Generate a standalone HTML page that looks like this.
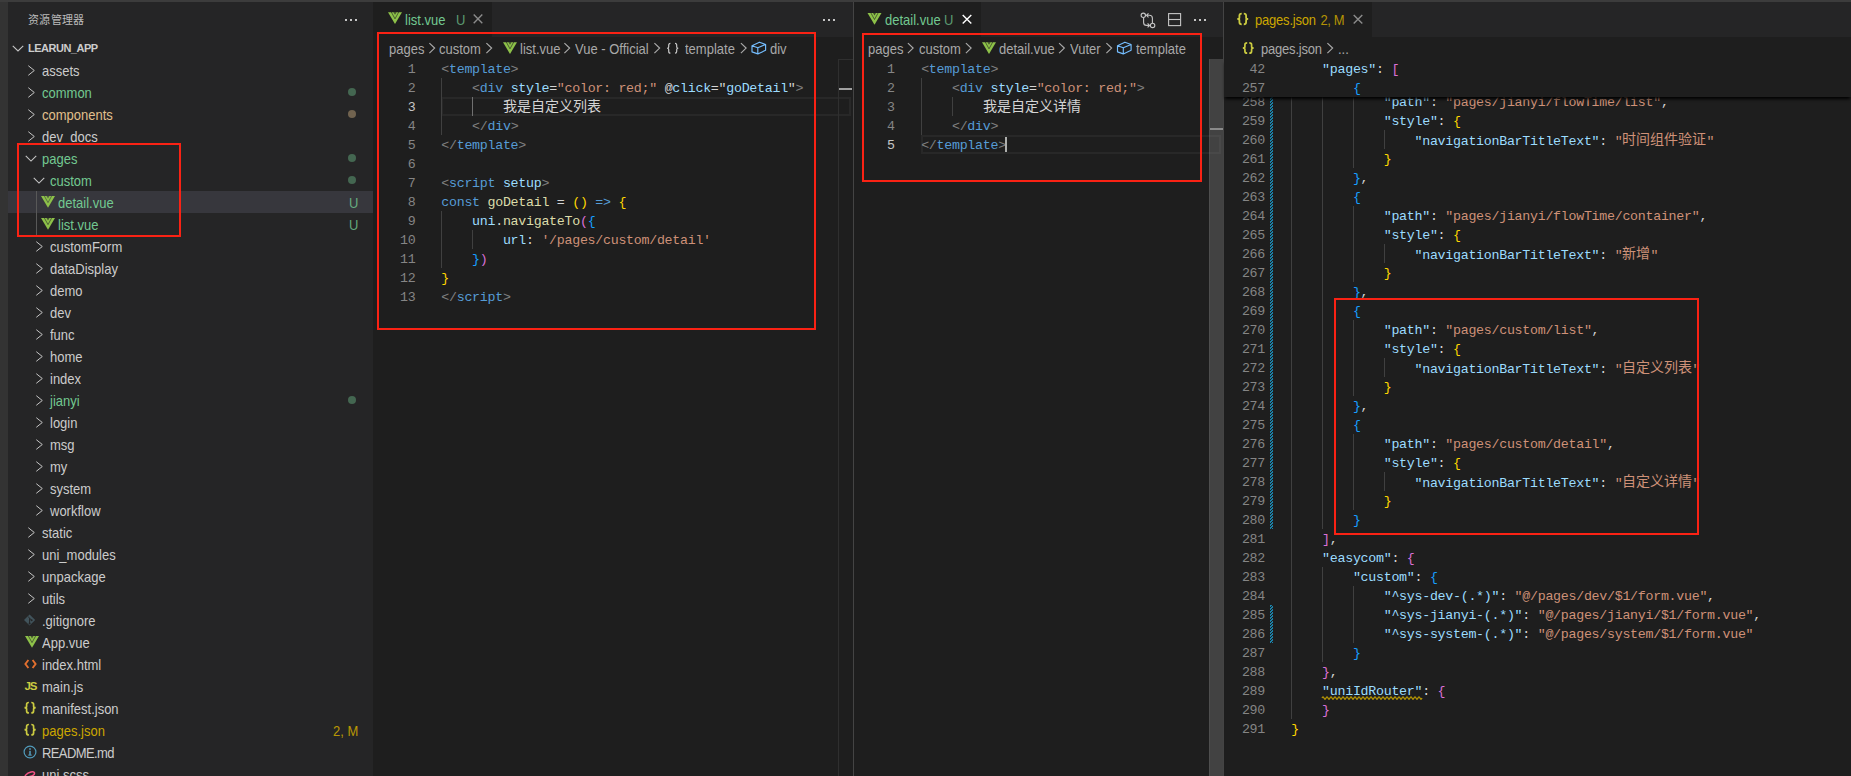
<!DOCTYPE html><html lang="zh-CN"><head><meta charset="utf-8"><title>VS Code</title><style>
*{box-sizing:border-box;margin:0;padding:0}
html,body{width:1851px;height:776px;overflow:hidden;background:#1e1e1e}
body{position:relative;font-family:"Liberation Sans",sans-serif;color:#cccccc}
.a{position:absolute}
.code{margin-top:1px;font-family:"Liberation Mono",monospace;font-size:13.3px;letter-spacing:-0.28px;white-space:pre;line-height:19px;height:19px;color:#d4d4d4}
.cj{font-size:14px;letter-spacing:0;font-family:"Liberation Sans",sans-serif;position:relative;top:-1px}
.tag{color:#569cd6}.br{color:#808080}.attr{color:#9cdcfe}.str{color:#ce9178}.txt{color:#d4d4d4}
.fn{color:#dcdcaa}.kw{color:#569cd6}.var{color:#9cdcfe}.g{color:#ffd700}.m{color:#da70d6}.b{color:#179fff}
.ln{margin-top:1px;font-family:"Liberation Mono",monospace;font-size:13.3px;letter-spacing:-0.28px;line-height:19px;height:19px;color:#858585;text-align:right;width:60px}
.ui{margin-top:2px;font-size:13px;line-height:22px;height:22px;white-space:pre;transform:scaleY(1.09);transform-origin:0 15.5px}
.ig{position:absolute;width:1px;background:#404040}
.red{position:absolute;border:2px solid #fa2214}
</style></head><body><div class="a" style="left:0px;top:0px;width:1851px;height:2px;background:#3c3c3c"></div><div class="a" style="left:0px;top:2px;width:8px;height:774px;background:#333333"></div><div class="a" style="left:8px;top:2px;width:365px;height:774px;background:#252526"></div><div class="a" style="left:853px;top:2px;width:1px;height:774px;background:#444444"></div><div class="a" style="left:1223px;top:2px;width:1px;height:774px;background:#444444"></div><div class="a" style="left:373px;top:2px;width:480px;height:35px;background:#252526"></div><div class="a" style="left:854px;top:2px;width:369px;height:35px;background:#252526"></div><div class="a" style="left:1224px;top:2px;width:627px;height:35px;background:#252526"></div><div class="a" style="left:28px;top:9px;font-size:11px;line-height:22px;color:#bbbbbb;letter-spacing:0.3px">资源管理器</div><div class="a" style="left:28px;top:37px;font-size:11px;line-height:22px;font-weight:bold;color:#cccccc;letter-spacing:-0.5px">LEARUN_APP</div><div class="a ui" style="left:42px;top:59px;color:#cccccc">assets</div><div class="a ui" style="left:42px;top:81px;color:#73c991">common</div><div class="a ui" style="left:42px;top:103px;color:#e2c08d">components</div><div class="a ui" style="left:42px;top:125px;color:#cccccc">dev_docs</div><div class="a ui" style="left:42px;top:147px;color:#73c991">pages</div><div class="a ui" style="left:50px;top:169px;color:#73c991">custom</div><div class="a" style="left:8px;top:191px;width:365px;height:22px;background:#37373d"></div><div class="a ui" style="left:58px;top:191px;color:#73c991">detail.vue</div><div class="a ui" style="left:349px;top:191px;color:#73c991;opacity:0.8">U</div><div class="a ui" style="left:58px;top:213px;color:#73c991">list.vue</div><div class="a ui" style="left:349px;top:213px;color:#73c991;opacity:0.8">U</div><div class="a ui" style="left:50px;top:235px;color:#cccccc">customForm</div><div class="a ui" style="left:50px;top:257px;color:#cccccc">dataDisplay</div><div class="a ui" style="left:50px;top:279px;color:#cccccc">demo</div><div class="a ui" style="left:50px;top:301px;color:#cccccc">dev</div><div class="a ui" style="left:50px;top:323px;color:#cccccc">func</div><div class="a ui" style="left:50px;top:345px;color:#cccccc">home</div><div class="a ui" style="left:50px;top:367px;color:#cccccc">index</div><div class="a ui" style="left:50px;top:389px;color:#73c991">jianyi</div><div class="a ui" style="left:50px;top:411px;color:#cccccc">login</div><div class="a ui" style="left:50px;top:433px;color:#cccccc">msg</div><div class="a ui" style="left:50px;top:455px;color:#cccccc">my</div><div class="a ui" style="left:50px;top:477px;color:#cccccc">system</div><div class="a ui" style="left:50px;top:499px;color:#cccccc">workflow</div><div class="a ui" style="left:42px;top:521px;color:#cccccc">static</div><div class="a ui" style="left:42px;top:543px;color:#cccccc">uni_modules</div><div class="a ui" style="left:42px;top:565px;color:#cccccc">unpackage</div><div class="a ui" style="left:42px;top:587px;color:#cccccc">utils</div><div class="a ui" style="left:42px;top:609px;color:#cccccc">.gitignore</div><div class="a ui" style="left:42px;top:631px;color:#cccccc">App.vue</div><div class="a ui" style="left:42px;top:653px;color:#cccccc">index.html</div><div class="a" style="left:24.5px;top:677.5px;font-size:11.5px;line-height:16px;font-weight:bold;color:#cbcb41;letter-spacing:-1.2px">JS</div><div class="a ui" style="left:42px;top:675px;color:#cccccc">main.js</div><div class="a ui" style="left:42px;top:697px;color:#cccccc">manifest.json</div><div class="a ui" style="left:42px;top:719px;color:#cca700">pages.json</div><div class="a ui" style="left:333px;top:719px;color:#cca700;opacity:0.88">2, M</div><div class="a ui" style="left:42px;top:741px;color:#cccccc;letter-spacing:-0.6px">README.md</div><div class="a ui" style="left:42px;top:763px;color:#cccccc">uni.scss</div><div class="a" style="left:36px;top:191px;width:1px;height:44px;background:#585858"></div><div class="a" style="left:373px;top:2px;width:119px;height:35px;background:#1e1e1e"></div><div class="a ui" style="left:405px;top:8px;color:#73c991">list.vue</div><div class="a ui" style="left:456px;top:8px;color:#73c991;opacity:0.72">U</div><div class="a ui" style="left:389px;top:37px;color:#a9a9a9">pages</div><div class="a ui" style="left:439px;top:37px;color:#a9a9a9">custom</div><div class="a ui" style="left:520px;top:37px;color:#a9a9a9">list.vue</div><div class="a ui" style="left:575px;top:37px;color:#a9a9a9">Vue - Official</div><div class="a ui" style="left:685px;top:37px;color:#a9a9a9">template</div><div class="a ui" style="left:770px;top:37px;color:#a9a9a9">div</div><div class="a" style="left:441.3px;top:97px;width:409.7px;height:19px;background:transparent;border:2px solid #282828"></div><div class="ig" style="left:441.3px;top:78px;height:57px;background:#404040"></div><div class="ig" style="left:472.1px;top:97px;height:19px;background:#707070"></div><div class="ig" style="left:441.3px;top:211px;height:57px;background:#404040"></div><div class="ig" style="left:472.1px;top:230px;height:19px;background:#404040"></div><div class="a" style="left:838px;top:59px;width:15px;height:717px;border-left:1px solid #2f2f2f;border-top:1px solid #2f2f2f"></div><div class="a" style="left:839px;top:88px;width:13px;height:2px;background:#a0a0a0"></div><div class="a ln" style="left:355.5px;top:59px;color:#858585">1</div><div class="a code" style="left:441.3px;top:59px"><span class="br">&lt;</span><span class="tag">template</span><span class="br">&gt;</span></div><div class="a ln" style="left:355.5px;top:78px;color:#858585">2</div><div class="a code" style="left:441.3px;top:78px">    <span class="br">&lt;</span><span class="tag">div</span> <span class="attr">style</span><span class="txt">=</span><span class="str">"color: red;"</span> <span class="txt">@</span><span class="attr">click</span><span class="txt">="</span><span class="var">goDetail</span><span class="txt">"</span><span class="br">&gt;</span></div><div class="a ln" style="left:355.5px;top:97px;color:#c6c6c6">3</div><div class="a code" style="left:441.3px;top:97px">        <span class="cj">我是自定义列表</span></div><div class="a ln" style="left:355.5px;top:116px;color:#858585">4</div><div class="a code" style="left:441.3px;top:116px">    <span class="br">&lt;/</span><span class="tag">div</span><span class="br">&gt;</span></div><div class="a ln" style="left:355.5px;top:135px;color:#858585">5</div><div class="a code" style="left:441.3px;top:135px"><span class="br">&lt;/</span><span class="tag">template</span><span class="br">&gt;</span></div><div class="a ln" style="left:355.5px;top:154px;color:#858585">6</div><div class="a code" style="left:441.3px;top:154px"></div><div class="a ln" style="left:355.5px;top:173px;color:#858585">7</div><div class="a code" style="left:441.3px;top:173px"><span class="br">&lt;</span><span class="tag">script</span> <span class="attr">setup</span><span class="br">&gt;</span></div><div class="a ln" style="left:355.5px;top:192px;color:#858585">8</div><div class="a code" style="left:441.3px;top:192px"><span class="kw">const</span> <span class="fn">goDetail</span><span class="txt"> = </span><span class="g">()</span><span class="txt"> </span><span class="kw">=&gt;</span><span class="txt"> </span><span class="g">{</span></div><div class="a ln" style="left:355.5px;top:211px;color:#858585">9</div><div class="a code" style="left:441.3px;top:211px">    <span class="var">uni</span><span class="txt">.</span><span class="fn">navigateTo</span><span class="m">(</span><span class="b">{</span></div><div class="a ln" style="left:355.5px;top:230px;color:#858585">10</div><div class="a code" style="left:441.3px;top:230px">        <span class="var">url</span><span class="txt">: </span><span class="str">'/pages/custom/detail'</span></div><div class="a ln" style="left:355.5px;top:249px;color:#858585">11</div><div class="a code" style="left:441.3px;top:249px">    <span class="b">}</span><span class="m">)</span></div><div class="a ln" style="left:355.5px;top:268px;color:#858585">12</div><div class="a code" style="left:441.3px;top:268px"><span class="g">}</span></div><div class="a ln" style="left:355.5px;top:287px;color:#858585">13</div><div class="a code" style="left:441.3px;top:287px"><span class="br">&lt;/</span><span class="tag">script</span><span class="br">&gt;</span></div><div class="a" style="left:854px;top:2px;width:127px;height:35px;background:#1e1e1e"></div><div class="a ui" style="left:885px;top:8px;color:#73c991">detail.vue</div><div class="a ui" style="left:944px;top:8px;color:#73c991;opacity:0.72">U</div><div class="a ui" style="left:868px;top:37px;color:#a9a9a9">pages</div><div class="a ui" style="left:919px;top:37px;color:#a9a9a9">custom</div><div class="a ui" style="left:999px;top:37px;color:#a9a9a9">detail.vue</div><div class="a ui" style="left:1070px;top:37px;color:#a9a9a9">Vuter</div><div class="a ui" style="left:1136px;top:37px;color:#a9a9a9">template</div><div class="a" style="left:921.15px;top:135px;width:299.85px;height:19px;background:transparent;border:2px solid #282828"></div><div class="ig" style="left:921.15px;top:78px;height:57px;background:#404040"></div><div class="ig" style="left:951.9499999999999px;top:97px;height:19px;background:#404040"></div><div class="a ln" style="left:834.8px;top:59px;color:#858585">1</div><div class="a code" style="left:921.15px;top:59px"><span class="br">&lt;</span><span class="tag">template</span><span class="br">&gt;</span></div><div class="a ln" style="left:834.8px;top:78px;color:#858585">2</div><div class="a code" style="left:921.15px;top:78px">    <span class="br">&lt;</span><span class="tag">div</span> <span class="attr">style</span><span class="txt">=</span><span class="str">"color: red;"</span><span class="br">&gt;</span></div><div class="a ln" style="left:834.8px;top:97px;color:#858585">3</div><div class="a code" style="left:921.15px;top:97px">        <span class="cj">我是自定义详情</span></div><div class="a ln" style="left:834.8px;top:116px;color:#858585">4</div><div class="a code" style="left:921.15px;top:116px">    <span class="br">&lt;/</span><span class="tag">div</span><span class="br">&gt;</span></div><div class="a ln" style="left:834.8px;top:135px;color:#c6c6c6">5</div><div class="a code" style="left:921.15px;top:135px"><span class="br">&lt;/</span><span class="tag">template</span><span class="br">&gt;</span></div><div class="a" style="left:1005px;top:137px;width:2px;height:15px;background:#aeafad"></div><div class="a" style="left:1209px;top:59px;width:14px;height:717px;background:#424242;border-left:1px solid #4e4e4e"></div><div class="a" style="left:1210px;top:128px;width:13px;height:2px;background:#8a8a8a"></div><div class="a" style="left:1209px;top:135px;width:12px;height:19px;background:transparent;border:2px solid rgba(255,255,255,0.04);border-left:none"></div><div class="a" style="left:1224px;top:2px;width:148px;height:35px;background:#1e1e1e"></div><div class="a ui" style="left:1255px;top:8px;color:#cca700;letter-spacing:-0.2px">pages.json</div><div class="a ui" style="left:1320.5px;top:8px;color:#cca700;letter-spacing:-0.4px;opacity:0.85">2, M</div><div class="a ui" style="left:1261px;top:37px;color:#a9a9a9;letter-spacing:-0.2px">pages.json</div><div class="a ui" style="left:1338px;top:37px;color:#a9a9a9">...</div><div class="ig" style="left:1291.3px;top:92px;height:19px;background:#404040"></div><div class="ig" style="left:1291.3px;top:111px;height:19px;background:#404040"></div><div class="ig" style="left:1291.3px;top:130px;height:19px;background:#404040"></div><div class="ig" style="left:1291.3px;top:149px;height:19px;background:#404040"></div><div class="ig" style="left:1291.3px;top:168px;height:19px;background:#404040"></div><div class="ig" style="left:1291.3px;top:187px;height:19px;background:#404040"></div><div class="ig" style="left:1291.3px;top:206px;height:19px;background:#404040"></div><div class="ig" style="left:1291.3px;top:225px;height:19px;background:#404040"></div><div class="ig" style="left:1291.3px;top:244px;height:19px;background:#404040"></div><div class="ig" style="left:1291.3px;top:263px;height:19px;background:#404040"></div><div class="ig" style="left:1291.3px;top:282px;height:19px;background:#404040"></div><div class="ig" style="left:1291.3px;top:301px;height:19px;background:#404040"></div><div class="ig" style="left:1291.3px;top:320px;height:19px;background:#404040"></div><div class="ig" style="left:1291.3px;top:339px;height:19px;background:#404040"></div><div class="ig" style="left:1291.3px;top:358px;height:19px;background:#404040"></div><div class="ig" style="left:1291.3px;top:377px;height:19px;background:#404040"></div><div class="ig" style="left:1291.3px;top:396px;height:19px;background:#404040"></div><div class="ig" style="left:1291.3px;top:415px;height:19px;background:#404040"></div><div class="ig" style="left:1291.3px;top:434px;height:19px;background:#404040"></div><div class="ig" style="left:1291.3px;top:453px;height:19px;background:#404040"></div><div class="ig" style="left:1291.3px;top:472px;height:19px;background:#404040"></div><div class="ig" style="left:1291.3px;top:491px;height:19px;background:#404040"></div><div class="ig" style="left:1291.3px;top:510px;height:19px;background:#404040"></div><div class="ig" style="left:1291.3px;top:529px;height:19px;background:#404040"></div><div class="ig" style="left:1291.3px;top:548px;height:19px;background:#404040"></div><div class="ig" style="left:1291.3px;top:567px;height:19px;background:#404040"></div><div class="ig" style="left:1291.3px;top:586px;height:19px;background:#404040"></div><div class="ig" style="left:1291.3px;top:605px;height:19px;background:#404040"></div><div class="ig" style="left:1291.3px;top:624px;height:19px;background:#404040"></div><div class="ig" style="left:1291.3px;top:643px;height:19px;background:#404040"></div><div class="ig" style="left:1291.3px;top:662px;height:19px;background:#404040"></div><div class="ig" style="left:1291.3px;top:681px;height:19px;background:#404040"></div><div class="ig" style="left:1291.3px;top:700px;height:19px;background:#404040"></div><div class="ig" style="left:1322.1px;top:92px;height:437px;background:#404040"></div><div class="ig" style="left:1322.1px;top:567px;height:95px;background:#404040"></div><div class="ig" style="left:1352.8999999999999px;top:92px;height:76px;background:#404040"></div><div class="ig" style="left:1352.8999999999999px;top:206px;height:76px;background:#404040"></div><div class="ig" style="left:1352.8999999999999px;top:320px;height:76px;background:#404040"></div><div class="ig" style="left:1352.8999999999999px;top:434px;height:76px;background:#404040"></div><div class="ig" style="left:1352.8999999999999px;top:586px;height:57px;background:#404040"></div><div class="ig" style="left:1383.7px;top:130px;height:19px;background:#404040"></div><div class="ig" style="left:1383.7px;top:244px;height:19px;background:#404040"></div><div class="ig" style="left:1383.7px;top:358px;height:19px;background:#404040"></div><div class="ig" style="left:1383.7px;top:472px;height:19px;background:#404040"></div><div class="a" style="left:1270px;top:92px;width:3px;height:437px;background:repeating-linear-gradient(-45deg,#1b81a8 0 1.4px,#1e1e1e 1.4px 2.12px)"></div><div class="a" style="left:1270px;top:605px;width:3px;height:38px;background:repeating-linear-gradient(-45deg,#1b81a8 0 1.4px,#1e1e1e 1.4px 2.12px)"></div><div class="a ln" style="left:1205px;top:92px;color:#858585">258</div><div class="a code" style="left:1291.3px;top:92px">            <span class="attr">"path"</span><span class="txt">: </span><span class="str">"pages/jianyi/flowTime/list"</span><span class="txt">,</span></div><div class="a ln" style="left:1205px;top:111px;color:#858585">259</div><div class="a code" style="left:1291.3px;top:111px">            <span class="attr">"style"</span><span class="txt">: </span><span class="g">{</span></div><div class="a ln" style="left:1205px;top:130px;color:#858585">260</div><div class="a code" style="left:1291.3px;top:130px">                <span class="attr">"navigationBarTitleText"</span><span class="txt">: </span><span class="str">"</span><span class="cj str">时间组件验证</span><span class="str">"</span></div><div class="a ln" style="left:1205px;top:149px;color:#858585">261</div><div class="a code" style="left:1291.3px;top:149px">            <span class="g">}</span></div><div class="a ln" style="left:1205px;top:168px;color:#858585">262</div><div class="a code" style="left:1291.3px;top:168px">        <span class="b">}</span><span class="txt">,</span></div><div class="a ln" style="left:1205px;top:187px;color:#858585">263</div><div class="a code" style="left:1291.3px;top:187px">        <span class="b">{</span></div><div class="a ln" style="left:1205px;top:206px;color:#858585">264</div><div class="a code" style="left:1291.3px;top:206px">            <span class="attr">"path"</span><span class="txt">: </span><span class="str">"pages/jianyi/flowTime/container"</span><span class="txt">,</span></div><div class="a ln" style="left:1205px;top:225px;color:#858585">265</div><div class="a code" style="left:1291.3px;top:225px">            <span class="attr">"style"</span><span class="txt">: </span><span class="g">{</span></div><div class="a ln" style="left:1205px;top:244px;color:#858585">266</div><div class="a code" style="left:1291.3px;top:244px">                <span class="attr">"navigationBarTitleText"</span><span class="txt">: </span><span class="str">"</span><span class="cj str">新增</span><span class="str">"</span></div><div class="a ln" style="left:1205px;top:263px;color:#858585">267</div><div class="a code" style="left:1291.3px;top:263px">            <span class="g">}</span></div><div class="a ln" style="left:1205px;top:282px;color:#858585">268</div><div class="a code" style="left:1291.3px;top:282px">        <span class="b">}</span><span class="txt">,</span></div><div class="a ln" style="left:1205px;top:301px;color:#858585">269</div><div class="a code" style="left:1291.3px;top:301px">        <span class="b">{</span></div><div class="a ln" style="left:1205px;top:320px;color:#858585">270</div><div class="a code" style="left:1291.3px;top:320px">            <span class="attr">"path"</span><span class="txt">: </span><span class="str">"pages/custom/list"</span><span class="txt">,</span></div><div class="a ln" style="left:1205px;top:339px;color:#858585">271</div><div class="a code" style="left:1291.3px;top:339px">            <span class="attr">"style"</span><span class="txt">: </span><span class="g">{</span></div><div class="a ln" style="left:1205px;top:358px;color:#858585">272</div><div class="a code" style="left:1291.3px;top:358px">                <span class="attr">"navigationBarTitleText"</span><span class="txt">: </span><span class="str">"</span><span class="cj str">自定义列表</span><span class="str">"</span></div><div class="a ln" style="left:1205px;top:377px;color:#858585">273</div><div class="a code" style="left:1291.3px;top:377px">            <span class="g">}</span></div><div class="a ln" style="left:1205px;top:396px;color:#858585">274</div><div class="a code" style="left:1291.3px;top:396px">        <span class="b">}</span><span class="txt">,</span></div><div class="a ln" style="left:1205px;top:415px;color:#858585">275</div><div class="a code" style="left:1291.3px;top:415px">        <span class="b">{</span></div><div class="a ln" style="left:1205px;top:434px;color:#858585">276</div><div class="a code" style="left:1291.3px;top:434px">            <span class="attr">"path"</span><span class="txt">: </span><span class="str">"pages/custom/detail"</span><span class="txt">,</span></div><div class="a ln" style="left:1205px;top:453px;color:#858585">277</div><div class="a code" style="left:1291.3px;top:453px">            <span class="attr">"style"</span><span class="txt">: </span><span class="g">{</span></div><div class="a ln" style="left:1205px;top:472px;color:#858585">278</div><div class="a code" style="left:1291.3px;top:472px">                <span class="attr">"navigationBarTitleText"</span><span class="txt">: </span><span class="str">"</span><span class="cj str">自定义详情</span><span class="str">"</span></div><div class="a ln" style="left:1205px;top:491px;color:#858585">279</div><div class="a code" style="left:1291.3px;top:491px">            <span class="g">}</span></div><div class="a ln" style="left:1205px;top:510px;color:#858585">280</div><div class="a code" style="left:1291.3px;top:510px">        <span class="b">}</span></div><div class="a ln" style="left:1205px;top:529px;color:#858585">281</div><div class="a code" style="left:1291.3px;top:529px">    <span class="m">]</span><span class="txt">,</span></div><div class="a ln" style="left:1205px;top:548px;color:#858585">282</div><div class="a code" style="left:1291.3px;top:548px">    <span class="attr">"easycom"</span><span class="txt">: </span><span class="m">{</span></div><div class="a ln" style="left:1205px;top:567px;color:#858585">283</div><div class="a code" style="left:1291.3px;top:567px">        <span class="attr">"custom"</span><span class="txt">: </span><span class="b">{</span></div><div class="a ln" style="left:1205px;top:586px;color:#858585">284</div><div class="a code" style="left:1291.3px;top:586px">            <span class="attr">"^sys-dev-(.*)"</span><span class="txt">: </span><span class="str">"@/pages/dev/$1/form.vue"</span><span class="txt">,</span></div><div class="a ln" style="left:1205px;top:605px;color:#858585">285</div><div class="a code" style="left:1291.3px;top:605px">            <span class="attr">"^sys-jianyi-(.*)"</span><span class="txt">: </span><span class="str">"@/pages/jianyi/$1/form.vue"</span><span class="txt">,</span></div><div class="a ln" style="left:1205px;top:624px;color:#858585">286</div><div class="a code" style="left:1291.3px;top:624px">            <span class="attr">"^sys-system-(.*)"</span><span class="txt">: </span><span class="str">"@/pages/system/$1/form.vue"</span></div><div class="a ln" style="left:1205px;top:643px;color:#858585">287</div><div class="a code" style="left:1291.3px;top:643px">        <span class="b">}</span></div><div class="a ln" style="left:1205px;top:662px;color:#858585">288</div><div class="a code" style="left:1291.3px;top:662px">    <span class="m">}</span><span class="txt">,</span></div><div class="a ln" style="left:1205px;top:681px;color:#858585">289</div><div class="a code" style="left:1291.3px;top:681px">    <span class="attr">"uniIdRouter"</span><span class="txt">: </span><span class="m">{</span></div><div class="a ln" style="left:1205px;top:700px;color:#858585">290</div><div class="a code" style="left:1291.3px;top:700px">    <span class="m">}</span></div><div class="a ln" style="left:1205px;top:719px;color:#858585">291</div><div class="a code" style="left:1291.3px;top:719px"><span class="g">}</span></div><div class="a" style="left:1224px;top:59px;width:627px;height:38px;background:#1e1e1e;box-shadow:0 3px 3px -1px #000"></div><div class="a ln" style="left:1205px;top:59px;color:#858585">42</div><div class="a code" style="left:1291.3px;top:59px">    <span class="attr">"pages"</span><span class="txt">: </span><span class="m">[</span></div><div class="a ln" style="left:1205px;top:78px;color:#858585">257</div><div class="a code" style="left:1291.3px;top:78px">        <span class="b">{</span></div><svg class="a" style="left:0;top:0" width="1851" height="776" viewBox="0 0 1851 776"><rect x="345" y="19" width="2" height="2" fill="#c5c5c5"/><rect x="350" y="19" width="2" height="2" fill="#c5c5c5"/><rect x="355" y="19" width="2" height="2" fill="#c5c5c5"/><path d="M12.75 45.8 L18 51.0 L23.25 45.8" fill="none" stroke="#c5c5c5" stroke-width="1.1"/><path d="M28.3 65.7 L34.3 70.5 L28.3 75.3" fill="none" stroke="#c5c5c5" stroke-width="1.0"/><path d="M28.3 87.7 L34.3 92.5 L28.3 97.3" fill="none" stroke="#c5c5c5" stroke-width="1.0"/><circle cx="352" cy="92" r="4" fill="#446751"/><path d="M28.3 109.7 L34.3 114.5 L28.3 119.3" fill="none" stroke="#c5c5c5" stroke-width="1.0"/><circle cx="352" cy="114" r="4" fill="#71634f"/><path d="M28.3 131.7 L34.3 136.5 L28.3 141.3" fill="none" stroke="#c5c5c5" stroke-width="1.0"/><path d="M25.75 155.9 L31 161.1 L36.25 155.9" fill="none" stroke="#c5c5c5" stroke-width="1.1"/><circle cx="352" cy="158" r="4" fill="#446751"/><path d="M33.75 177.9 L39 183.1 L44.25 177.9" fill="none" stroke="#c5c5c5" stroke-width="1.1"/><circle cx="352" cy="180" r="4" fill="#446751"/><path d="M41 196 H55 L48 207.8 Z" fill="#8dc149"/><path d="M44.2 195.7 L48 202.6 L51.8 195.7" fill="none" stroke="#37373d" stroke-width="1" opacity="0.6"/><path d="M46.5 196 H49.5 L48 198.5 Z" fill="#37373d" opacity="0.7"/><path d="M41 218 H55 L48 229.8 Z" fill="#8dc149"/><path d="M44.2 217.7 L48 224.6 L51.8 217.7" fill="none" stroke="#252526" stroke-width="1" opacity="0.6"/><path d="M46.5 218 H49.5 L48 220.5 Z" fill="#252526" opacity="0.7"/><path d="M36.3 241.7 L42.3 246.5 L36.3 251.3" fill="none" stroke="#c5c5c5" stroke-width="1.0"/><path d="M36.3 263.7 L42.3 268.5 L36.3 273.3" fill="none" stroke="#c5c5c5" stroke-width="1.0"/><path d="M36.3 285.7 L42.3 290.5 L36.3 295.3" fill="none" stroke="#c5c5c5" stroke-width="1.0"/><path d="M36.3 307.7 L42.3 312.5 L36.3 317.3" fill="none" stroke="#c5c5c5" stroke-width="1.0"/><path d="M36.3 329.7 L42.3 334.5 L36.3 339.3" fill="none" stroke="#c5c5c5" stroke-width="1.0"/><path d="M36.3 351.7 L42.3 356.5 L36.3 361.3" fill="none" stroke="#c5c5c5" stroke-width="1.0"/><path d="M36.3 373.7 L42.3 378.5 L36.3 383.3" fill="none" stroke="#c5c5c5" stroke-width="1.0"/><path d="M36.3 395.7 L42.3 400.5 L36.3 405.3" fill="none" stroke="#c5c5c5" stroke-width="1.0"/><circle cx="352" cy="400" r="4" fill="#446751"/><path d="M36.3 417.7 L42.3 422.5 L36.3 427.3" fill="none" stroke="#c5c5c5" stroke-width="1.0"/><path d="M36.3 439.7 L42.3 444.5 L36.3 449.3" fill="none" stroke="#c5c5c5" stroke-width="1.0"/><path d="M36.3 461.7 L42.3 466.5 L36.3 471.3" fill="none" stroke="#c5c5c5" stroke-width="1.0"/><path d="M36.3 483.7 L42.3 488.5 L36.3 493.3" fill="none" stroke="#c5c5c5" stroke-width="1.0"/><path d="M36.3 505.7 L42.3 510.5 L36.3 515.3" fill="none" stroke="#c5c5c5" stroke-width="1.0"/><path d="M28.3 527.7 L34.3 532.5 L28.3 537.3" fill="none" stroke="#c5c5c5" stroke-width="1.0"/><path d="M28.3 549.7 L34.3 554.5 L28.3 559.3" fill="none" stroke="#c5c5c5" stroke-width="1.0"/><path d="M28.3 571.7 L34.3 576.5 L28.3 581.3" fill="none" stroke="#c5c5c5" stroke-width="1.0"/><path d="M28.3 593.7 L34.3 598.5 L28.3 603.3" fill="none" stroke="#c5c5c5" stroke-width="1.0"/><path d="M29.6 614.4 L35.2 620 L29.6 625.6 L24 620 Z" fill="#41535b"/><path d="M28.2 616.8 L31.6 620.2 M29.6 618.4 V623.5" stroke="#252526" stroke-width="1"/><circle cx="29.6" cy="623.4" r="1" fill="#252526"/><circle cx="31.6" cy="620.2" r="1" fill="#252526"/><path d="M25 636 H39 L32 647.8 Z" fill="#8dc149"/><path d="M28.2 635.7 L32 642.6 L35.8 635.7" fill="none" stroke="#252526" stroke-width="1" opacity="0.6"/><path d="M30.5 636 H33.5 L32 638.5 Z" fill="#252526" opacity="0.7"/><path d="M28.4 660 L25.4 664 L28.4 668 M32.6 660 L35.6 664 L32.6 668" fill="none" stroke="#e4702f" stroke-width="1.9"/><path d="M28.9 702.5 Q26.599999999999998 702.5 26.599999999999998 704.5 V706.5 Q26.599999999999998 707.7 24.5 707.7 Q26.599999999999998 707.7 26.599999999999998 708.9000000000001 V710.9000000000001 Q26.599999999999998 712.9000000000001 28.9 712.9000000000001" fill="none" stroke="#cbcb41" stroke-width="1.7"/><path d="M31.3 702.5 Q33.6 702.5 33.6 704.5 V706.5 Q33.6 707.7 35.7 707.7 Q33.6 707.7 33.6 708.9000000000001 V710.9000000000001 Q33.6 712.9000000000001 31.3 712.9000000000001" fill="none" stroke="#cbcb41" stroke-width="1.7"/><path d="M28.9 724.5 Q26.599999999999998 724.5 26.599999999999998 726.5 V728.5 Q26.599999999999998 729.7 24.5 729.7 Q26.599999999999998 729.7 26.599999999999998 730.9000000000001 V732.9000000000001 Q26.599999999999998 734.9000000000001 28.9 734.9000000000001" fill="none" stroke="#cbcb41" stroke-width="1.7"/><path d="M31.3 724.5 Q33.6 724.5 33.6 726.5 V728.5 Q33.6 729.7 35.7 729.7 Q33.6 729.7 33.6 730.9000000000001 V732.9000000000001 Q33.6 734.9000000000001 31.3 734.9000000000001" fill="none" stroke="#cbcb41" stroke-width="1.7"/><circle cx="30" cy="752" r="5.9" fill="none" stroke="#519aba" stroke-width="1.2"/><rect x="29.2" y="750.8" width="1.6" height="4.4" fill="#519aba"/><rect x="28.2" y="754.6" width="3.6" height="1" fill="#519aba"/><rect x="29.2" y="748.2" width="1.6" height="1.6" fill="#519aba"/><path d="M26 780 C23 776 27 773 31 772 C35 771 36 774 32 776 C29 777.5 28 775 30 780" fill="none" stroke="#f55385" stroke-width="1.5"/><path d="M388 12.2 H402 L395 24.0 Z" fill="#8dc149"/><path d="M391.2 11.899999999999999 L395 18.799999999999997 L398.8 11.899999999999999" fill="none" stroke="#1e1e1e" stroke-width="1" opacity="0.6"/><path d="M393.5 12.2 H396.5 L395 14.7 Z" fill="#1e1e1e" opacity="0.7"/><path d="M473.7 14.599999999999998 L482.3 23.2 M482.3 14.599999999999998 L473.7 23.2" stroke="#8b8b8b" stroke-width="1.4"/><rect x="823" y="19" width="2" height="2" fill="#c5c5c5"/><rect x="828" y="19" width="2" height="2" fill="#c5c5c5"/><rect x="833" y="19" width="2" height="2" fill="#c5c5c5"/><path d="M429.4 43.1 L434.6 48.1 L429.4 53.1" fill="none" stroke="#a9a9a9" stroke-width="1.2"/><path d="M486.4 43.1 L491.6 48.1 L486.4 53.1" fill="none" stroke="#a9a9a9" stroke-width="1.2"/><path d="M503 42.2 H517 L510 54.0 Z" fill="#8dc149"/><path d="M506.2 41.900000000000006 L510 48.800000000000004 L513.8 41.900000000000006" fill="none" stroke="#1e1e1e" stroke-width="1" opacity="0.6"/><path d="M508.5 42.2 H511.5 L510 44.7 Z" fill="#1e1e1e" opacity="0.7"/><path d="M564.4 43.1 L569.6 48.1 L564.4 53.1" fill="none" stroke="#a9a9a9" stroke-width="1.2"/><path d="M654.4 43.1 L659.6 48.1 L654.4 53.1" fill="none" stroke="#a9a9a9" stroke-width="1.2"/><path d="M670.4 43.3 Q668.6999999999999 43.3 668.6999999999999 45.3 V47.05 Q668.6999999999999 48.25 667.0999999999999 48.25 Q668.6999999999999 48.25 668.6999999999999 49.45 V51.2 Q668.6999999999999 53.2 670.4 53.2" fill="none" stroke="#c8c8c8" stroke-width="1.2"/><path d="M674.9999999999999 43.3 Q676.6999999999999 43.3 676.6999999999999 45.3 V47.05 Q676.6999999999999 48.25 678.3 48.25 Q676.6999999999999 48.25 676.6999999999999 49.45 V51.2 Q676.6999999999999 53.2 674.9999999999999 53.2" fill="none" stroke="#c8c8c8" stroke-width="1.2"/><path d="M740.9 43.1 L746.1 48.1 L740.9 53.1" fill="none" stroke="#a9a9a9" stroke-width="1.2"/><path d="M752 45.800000000000004 L759.4 42.2 L765.6 44.5 L765.6 50.300000000000004 L757.8 53.900000000000006 L752 51.900000000000006 Z M752 45.800000000000004 L757.8 47.7 L765.6 44.5 M757.8 47.7 L757.8 53.900000000000006" fill="none" stroke="#75beff" stroke-width="1.15" stroke-linejoin="round"/><path d="M867.5 12.9 H881.5 L874.5 24.700000000000003 Z" fill="#8dc149"/><path d="M870.7 12.6 L874.5 19.5 L878.3 12.6" fill="none" stroke="#1e1e1e" stroke-width="1" opacity="0.6"/><path d="M873.0 12.9 H876.0 L874.5 15.4 Z" fill="#1e1e1e" opacity="0.7"/><path d="M962.7 14.899999999999999 L971.3 23.5 M971.3 14.899999999999999 L962.7 23.5" stroke="#ffffff" stroke-width="1.4"/><g fill="none" stroke="#c5c5c5" stroke-width="1.1"><circle cx="1143.3" cy="15.3" r="2.2"/><circle cx="1152.6" cy="25.4" r="2.2"/><path d="M1143.6 17.5 V22.4 Q1143.6 25.4 1146.6 25.4 H1149.5 M1147.6 23.4 L1149.6 25.4 L1147.6 27.4"/><path d="M1152.4 23.2 V18.3 Q1152.4 15.3 1149.4 15.3 H1146.5 M1148.5 13.3 L1146.5 15.3 L1148.5 17.3"/></g><g fill="none" stroke="#c5c5c5" stroke-width="1.1"><rect x="1168.6" y="13.6" width="12" height="12"/><path d="M1168.6 19.5 H1180.6"/></g><rect x="1194" y="19" width="2" height="2" fill="#c5c5c5"/><rect x="1199" y="19" width="2" height="2" fill="#c5c5c5"/><rect x="1204" y="19" width="2" height="2" fill="#c5c5c5"/><path d="M907.9 43.1 L913.1 48.1 L907.9 53.1" fill="none" stroke="#a9a9a9" stroke-width="1.2"/><path d="M965.9 43.1 L971.1 48.1 L965.9 53.1" fill="none" stroke="#a9a9a9" stroke-width="1.2"/><path d="M982 42.2 H996 L989 54.0 Z" fill="#8dc149"/><path d="M985.2 41.900000000000006 L989 48.800000000000004 L992.8 41.900000000000006" fill="none" stroke="#1e1e1e" stroke-width="1" opacity="0.6"/><path d="M987.5 42.2 H990.5 L989 44.7 Z" fill="#1e1e1e" opacity="0.7"/><path d="M1059.1000000000001 43.1 L1064.3 48.1 L1059.1000000000001 53.1" fill="none" stroke="#a9a9a9" stroke-width="1.2"/><path d="M1106.4 43.1 L1111.6 48.1 L1106.4 53.1" fill="none" stroke="#a9a9a9" stroke-width="1.2"/><path d="M1117.5 45.800000000000004 L1124.9 42.2 L1131.1 44.5 L1131.1 50.300000000000004 L1123.3 53.900000000000006 L1117.5 51.900000000000006 Z M1117.5 45.800000000000004 L1123.3 47.7 L1131.1 44.5 M1123.3 47.7 L1123.3 53.900000000000006" fill="none" stroke="#75beff" stroke-width="1.15" stroke-linejoin="round"/><path d="M1241.7 13.600000000000001 Q1239.4 13.600000000000001 1239.4 15.600000000000001 V17.750000000000004 Q1239.4 18.950000000000003 1237.3 18.950000000000003 Q1239.4 18.950000000000003 1239.4 20.150000000000002 V22.3 Q1239.4 24.3 1241.7 24.3" fill="none" stroke="#cbcb41" stroke-width="1.8"/><path d="M1243.8 13.600000000000001 Q1246.1 13.600000000000001 1246.1 15.600000000000001 V17.750000000000004 Q1246.1 18.950000000000003 1248.2 18.950000000000003 Q1246.1 18.950000000000003 1246.1 20.150000000000002 V22.3 Q1246.1 24.3 1243.8 24.3" fill="none" stroke="#cbcb41" stroke-width="1.8"/><path d="M1353.7 14.899999999999999 L1362.3 23.5 M1362.3 14.899999999999999 L1353.7 23.5" stroke="#8b8b8b" stroke-width="1.4"/><path d="M1247.2 42.8 Q1244.9 42.8 1244.9 44.8 V46.8 Q1244.9 48.0 1242.8 48.0 Q1244.9 48.0 1244.9 49.2 V51.2 Q1244.9 53.2 1247.2 53.2" fill="none" stroke="#cbcb41" stroke-width="1.7"/><path d="M1249.3 42.8 Q1251.6 42.8 1251.6 44.8 V46.8 Q1251.6 48.0 1253.7 48.0 Q1251.6 48.0 1251.6 49.2 V51.2 Q1251.6 53.2 1249.3 53.2" fill="none" stroke="#cbcb41" stroke-width="1.7"/><path d="M1327.4 43.1 L1332.6 48.1 L1327.4 53.1" fill="none" stroke="#a9a9a9" stroke-width="1.2"/><path d="M1322 698 Q1323 695.5 1324 698 Q1325 700.5 1326 698 Q1327 695.5 1328 698 Q1329 700.5 1330 698 Q1331 695.5 1332 698 Q1333 700.5 1334 698 Q1335 695.5 1336 698 Q1337 700.5 1338 698 Q1339 695.5 1340 698 Q1341 700.5 1342 698 Q1343 695.5 1344 698 Q1345 700.5 1346 698 Q1347 695.5 1348 698 Q1349 700.5 1350 698 Q1351 695.5 1352 698 Q1353 700.5 1354 698 Q1355 695.5 1356 698 Q1357 700.5 1358 698 Q1359 695.5 1360 698 Q1361 700.5 1362 698 Q1363 695.5 1364 698 Q1365 700.5 1366 698 Q1367 695.5 1368 698 Q1369 700.5 1370 698 Q1371 695.5 1372 698 Q1373 700.5 1374 698 Q1375 695.5 1376 698 Q1377 700.5 1378 698 Q1379 695.5 1380 698 Q1381 700.5 1382 698 Q1383 695.5 1384 698 Q1385 700.5 1386 698 Q1387 695.5 1388 698 Q1389 700.5 1390 698 Q1391 695.5 1392 698 Q1393 700.5 1394 698 Q1395 695.5 1396 698 Q1397 700.5 1398 698 Q1399 695.5 1400 698 Q1401 700.5 1402 698 Q1403 695.5 1404 698 Q1405 700.5 1406 698 Q1407 695.5 1408 698 Q1409 700.5 1410 698 Q1411 695.5 1412 698 Q1413 700.5 1414 698 Q1415 695.5 1416 698 Q1417 700.5 1418 698 Q1419 695.5 1420 698 Q1421 700.5 1422 698" fill="none" stroke="#cca700" stroke-width="1.1"/></svg><div class="red" style="left:17px;top:143px;width:164px;height:94px"></div><div class="red" style="left:377px;top:32px;width:439px;height:298px"></div><div class="red" style="left:862px;top:33px;width:340px;height:149px"></div><div class="red" style="left:1334px;top:298px;width:365px;height:237px"></div></body></html>
